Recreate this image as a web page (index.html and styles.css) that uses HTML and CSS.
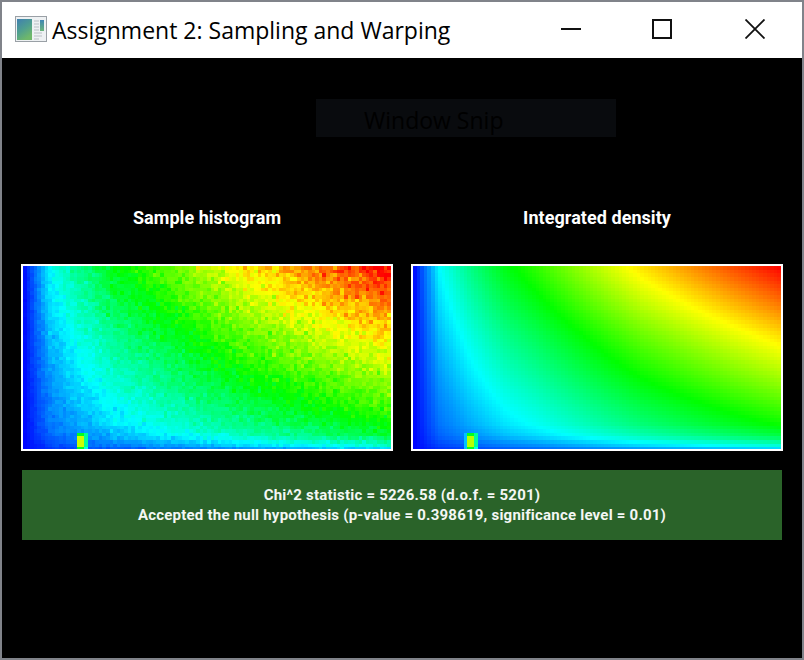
FILE: index.html
```html
<!DOCTYPE html>
<html lang="en">
<head>
  <meta charset="UTF-8" />
  <title>Assignment 2: Sampling and Warping</title>
  <link rel="stylesheet" href="styles.css">
</head>
<body>
  <div class="window">
    <header class="titlebar">
      <svg class="app-icon" width="32" height="26" viewBox="0 0 32 26">
        <defs>
          <linearGradient id="pane" x1="0" y1="0" x2="0.5" y2="1">
            <stop offset="0" stop-color="#3f7fb0"/>
            <stop offset="0.55" stop-color="#4f9f90"/>
            <stop offset="1" stop-color="#6fb86a"/>
          </linearGradient>
          <linearGradient id="strip" x1="0" y1="0" x2="0" y2="1">
            <stop offset="0" stop-color="#3f86b4"/>
            <stop offset="1" stop-color="#6ab57a"/>
          </linearGradient>
        </defs>
        <rect x="0.5" y="0.5" width="31" height="25" fill="#eef1f3" stroke="#9aa0a6"/>
        <rect x="2" y="3" width="15" height="21" fill="url(#pane)"/>
        <rect x="25" y="4" width="4" height="11" fill="url(#strip)"/>
        <path d="M19 5h5M19 8h5M19 11h5M19 14h5M19 17h8M19 20h8M19 23h5" stroke="#b9bfc4"/>
      </svg>
      <h1 class="title">Assignment 2: Sampling and Warping</h1>
      <div class="controls">
        <button class="control control-min">
          <svg width="20" height="20" viewBox="0 0 20 20"><path d="M0 10h20" stroke="#111" stroke-width="2"/></svg>
        </button>
        <button class="control">
          <svg width="20" height="20" viewBox="0 0 20 20"><rect x="1" y="1" width="18" height="18" fill="none" stroke="#111" stroke-width="2"/></svg>
        </button>
        <button class="control control-close">
          <svg width="20" height="20" viewBox="0 0 20 20"><path d="M0.5 0.5l19 19M19.5 0.5l-19 19" stroke="#111" stroke-width="1.8" fill="none"/></svg>
        </button>
      </div>
    </header>
    <main class="content">
      <div class="snip-ghost">Window Snip</div>
      <div class="panels">
        <section class="panel">
          <h2 class="panel-title">Sample histogram</h2>
          <div class="heatmap-frame">
            <canvas class="heatmap" id="histogram" width="102" height="51"></canvas>
          </div>
        </section>
        <section class="panel">
          <h2 class="panel-title">Integrated density</h2>
          <div class="heatmap-frame">
            <canvas class="heatmap" id="density" width="102" height="51"></canvas>
          </div>
        </section>
      </div>
      <div class="result">
        <div>Chi^2 statistic = 5226.58 (d.o.f. = 5201)</div>
        <div>Accepted the null hypothesis (p-value = 0.398619, significance level = 0.01)</div>
      </div>
    </main>
  </div>
  <script src="heatmap.js"></script>
</body>
</html>
```

FILE: styles.css
```css
html, body {
  margin: 0;
  height: 100%;
}
body {
  background: #80838a;
  overflow: hidden;
}
.window {
  box-sizing: border-box;
  width: 800px;
  height: 656px;
  margin: 2px;
  background: #000;
  display: flex;
  flex-direction: column;
}
.titlebar {
  height: 56px;
  background: #fff;
  display: flex;
  align-items: center;
  padding-left: 13px;
}
.app-icon {
  flex: none;
  margin-top: -2px;
}
.title {
  margin: 0 0 0 5px;
  font-family: "Open Sans", sans-serif;
  font-size: 23px;
  font-weight: 400;
  color: #000;
  white-space: nowrap;
}
.controls {
  margin-left: auto;
  margin-right: 1px;
  display: flex;
}
.control {
  width: 92px;
  height: 56px;
  padding: 0;
  border: none;
  background: none;
  display: flex;
  align-items: center;
  justify-content: center;
}
.control-min {
  width: 90px;
}
.control-close {
  margin-left: 1px;
}
.control svg {
  margin-top: -2px;
}
.content {
  flex: 1;
  padding: 0 20px;
}
.snip-ghost {
  box-sizing: border-box;
  width: 300px;
  height: 38px;
  margin: 41px 0 0 294px;
  padding: 2px 0 0 48px;
  background: #090b0e;
  color: #000;
  font-family: "Open Sans", sans-serif;
  font-size: 23px;
  line-height: 38px;
}
.panels {
  display: flex;
  gap: 18px;
  margin: 65px -1px 0;
}
.panel {
  width: 372px;
}
.panel-title {
  margin: 0 0 30px;
  height: 32px;
  font-family: Roboto, sans-serif;
  font-size: 18px;
  font-weight: 700;
  line-height: 32px;
  letter-spacing: 0.05px;
  text-align: center;
  color: #fff;
}
.heatmap-frame {
  width: 368px;
  height: 183px;
  border: 2px solid #fff;
  overflow: hidden;
}
.heatmap {
  display: block;
  width: 368px;
  height: 185px;
  image-rendering: pixelated;
}
.result {
  margin-top: 19px;
  height: 70px;
  background: #2a6329;
  color: #f4f7f4;
  font-family: Roboto, sans-serif;
  font-size: 15px;
  font-weight: 700;
  line-height: 20px;
  letter-spacing: 0.22px;
  text-align: center;
  display: flex;
  flex-direction: column;
  justify-content: center;
}
```

FILE: heatmap.js
```js
const COLS = 102;
const ROWS = 51;

// marginals read off the reference, value is hue position 0 (blue) .. 1 (red)
const uCurve = [[0, 0], [0.07, 0.235], [0.15, 0.34], [0.25, 0.45], [0.33, 0.51], [0.62, 0.75], [1, 1]];
const vCurve = [[0, 0.17], [0.02, 0.25], [0.08, 0.4], [0.15, 0.48], [0.39, 0.62], [0.62, 0.75], [1, 1]];

function lerpCurve(curve, x) {
  for (let i = 1; i < curve.length; i++) {
    if (x <= curve[i][0]) {
      const a = curve[i - 1];
      const b = curve[i];
      return a[1] + (b[1] - a[1]) * (x - a[0]) / (b[0] - a[0]);
    }
  }
  return curve[curve.length - 1][1];
}

function density(col, row) {
  const u = (col + 0.5) / COLS;
  const v = (ROWS - row - 0.5) / ROWS;
  const p = lerpCurve(uCurve, u) * lerpCurve(vCurve, v);
  // lift only above the blue end, the product alone reads a bit low there
  return p > 0.15 ? p + 0.2 * (p - 0.15) * (1 - p) : p;
}

function colormap(t) {
  const x = Math.max(0, Math.min(1, t)) * 4;
  const seg = Math.min(3, Math.floor(x));
  const f = x - seg;
  if (seg === 0) return [0, 255 * f, 255];
  if (seg === 1) return [0, 255, 255 * (1 - f)];
  if (seg === 2) return [255 * f, 255, 0];
  return [255, 255 * (1 - f), 0];
}

// small seeded generator so the picture stays the same on every load
let seed = 20240;
function rand() {
  seed = (seed * 1664525 + 1013904223) % 4294967296;
  return seed / 4294967296;
}
function gauss() {
  return Math.sqrt(-2 * Math.log(rand() + 1e-9)) * Math.cos(2 * Math.PI * rand());
}

// the bright spike near the bottom left: [col, row from bottom, value]
const spikeHist = [
  [15, 0, 0.47], [16, 0, 0.47], [15, 1, 0.7], [16, 1, 0.7], [15, 2, 0.7], [16, 2, 0.7],
  [15, 3, 0.7], [16, 3, 0.7], [15, 4, 0.47], [16, 4, 0.47],
  [17, 0, 0.27], [17, 1, 0.35], [17, 2, 0.35], [17, 3, 0.35], [17, 4, 0.35]
];
const spikeDensity = spikeHist.concat([
  [14, 0, 0.19], [14, 1, 0.19], [14, 2, 0.19], [14, 3, 0.19], [14, 4, 0.19],
  [15, 1, 0.68], [16, 1, 0.68], [15, 2, 0.68], [16, 2, 0.68], [15, 3, 0.68], [16, 3, 0.68]
]);

function draw(id, noise, spikes) {
  const ctx = document.getElementById(id).getContext("2d");
  const img = ctx.createImageData(COLS, ROWS);
  const over = {};
  spikes.forEach(s => { over[s[0] + "," + (ROWS - 1 - s[1])] = s[2]; });
  for (let row = 0; row < ROWS; row++) {
    for (let col = 0; col < COLS; col++) {
      let val = density(col, row);
      if (noise) val += gauss() * noise * Math.pow(val, 0.7);
      const key = col + "," + row;
      if (key in over) val = over[key];
      const c = colormap(val);
      const i = (row * COLS + col) * 4;
      img.data[i] = c[0];
      img.data[i + 1] = c[1];
      img.data[i + 2] = c[2];
      img.data[i + 3] = 255;
    }
  }
  ctx.putImageData(img, 0, 0);
}

draw("histogram", 0.04, spikeHist);
draw("density", 0, spikeDensity);
```
